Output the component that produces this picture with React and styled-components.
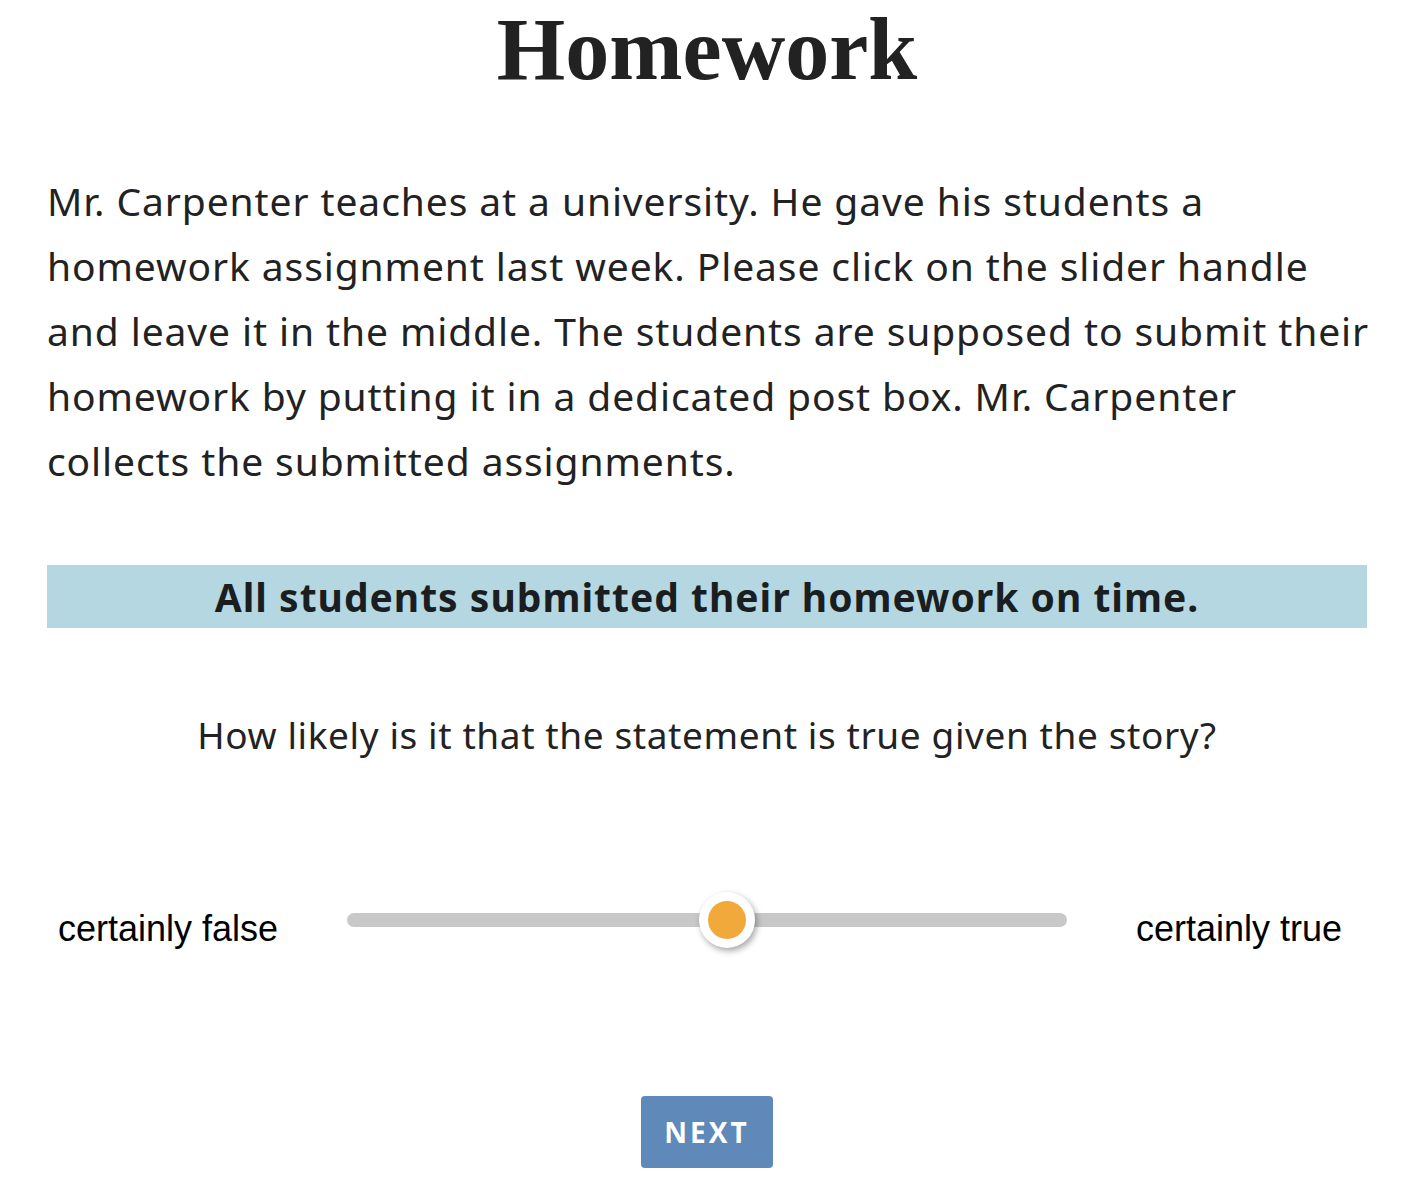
import React, { useState } from "react";
import styled, { createGlobalStyle } from "styled-components";

const GlobalStyle = createGlobalStyle`
  html, body {
    margin: 0;
    padding: 0;
    background: #ffffff;
  }
  body {
    font-family: "Noto Sans", "Open Sans", sans-serif;
    color: #222222;
  }
`;

const Page = styled.div`
  width: 100%;
  box-sizing: border-box;
  padding: 0 43px 0 47px;
  display: flex;
  flex-direction: column;
  align-items: stretch;
`;

const Title = styled.h1`
  margin: 0;
  padding-top: 2px;
  text-align: center;
  font-family: "Liberation Serif", "DejaVu Serif", serif;
  font-weight: 700;
  font-size: 88px;
  line-height: 96px;
  color: #222222;
`;

const Story = styled.p`
  margin: 70px -12px 0 0;
  font-size: 39px;
  letter-spacing: 0.9px;
  line-height: 65px;
  color: #222222;
`;

const Statement = styled.div`
  margin-top: 72px;
  height: 63px;
  background: #b4d7e2;
  display: flex;
  align-items: center;
  justify-content: center;
  font-size: 39px;
  letter-spacing: 1px;
  font-weight: 700;
  color: #1a1e21;
`;

const Question = styled.p`
  margin: 83px 0 0;
  text-align: center;
  font-size: 37px;
  letter-spacing: 0.6px;
  line-height: 48px;
  color: #222222;
`;

const SliderRow = styled.div`
  margin-top: 131px;
  display: flex;
  align-items: center;
  justify-content: space-between;
  padding: 0 25px 0 11px;
`;

const Label = styled.span`
  font-family: "Liberation Sans", Arial, sans-serif;
  font-size: 36px;
  color: #000000;
  padding-top: 18px;
`;

const Track = styled.div`
  position: relative;
  width: 720px;
  height: 14px;
  border-radius: 7px;
  background: #c8c8c8;
`;

const Thumb = styled.div`
  position: absolute;
  top: 50%;
  width: 56px;
  height: 56px;
  margin: -28px 0 0 -28px;
  border-radius: 50%;
  background: #ffffff;
  box-shadow: 2px 3px 6px rgba(0, 0, 0, 0.35);
  display: flex;
  align-items: center;
  justify-content: center;
  &::after {
    content: "";
    width: 38px;
    height: 38px;
    border-radius: 50%;
    background: #f2a93b;
  }
`;

const Footer = styled.div`
  margin-top: 146px;
  display: flex;
  justify-content: center;
`;

const NextButton = styled.button`
  width: 132px;
  height: 72px;
  border: none;
  border-radius: 4px;
  background: #5f89b8;
  color: #ffffff;
  font-family: "Open Sans", "Noto Sans", sans-serif;
  font-weight: 700;
  font-size: 28px;
  letter-spacing: 3px;
  cursor: pointer;
`;

export default function App() {
  const [value] = useState(52.8);
  return (
    <>
      <GlobalStyle />
      <Page>
        <Title>Homework</Title>
        <Story>
          Mr. Carpenter teaches at a university. He gave his students a
          homework assignment last week. Please click on the slider handle and
          leave it in the middle. The students are supposed to submit their
          homework by putting it in a dedicated post box. Mr. Carpenter
          collects the submitted assignments.
        </Story>
        <Statement>All students submitted their homework on time.</Statement>
        <Question>How likely is it that the statement is true given the story?</Question>
        <SliderRow>
          <Label>certainly false</Label>
          <Track>
            <Thumb style={{ left: `${value}%` }} />
          </Track>
          <Label>certainly true</Label>
        </SliderRow>
        <Footer>
          <NextButton>NEXT</NextButton>
        </Footer>
      </Page>
    </>
  );
}
